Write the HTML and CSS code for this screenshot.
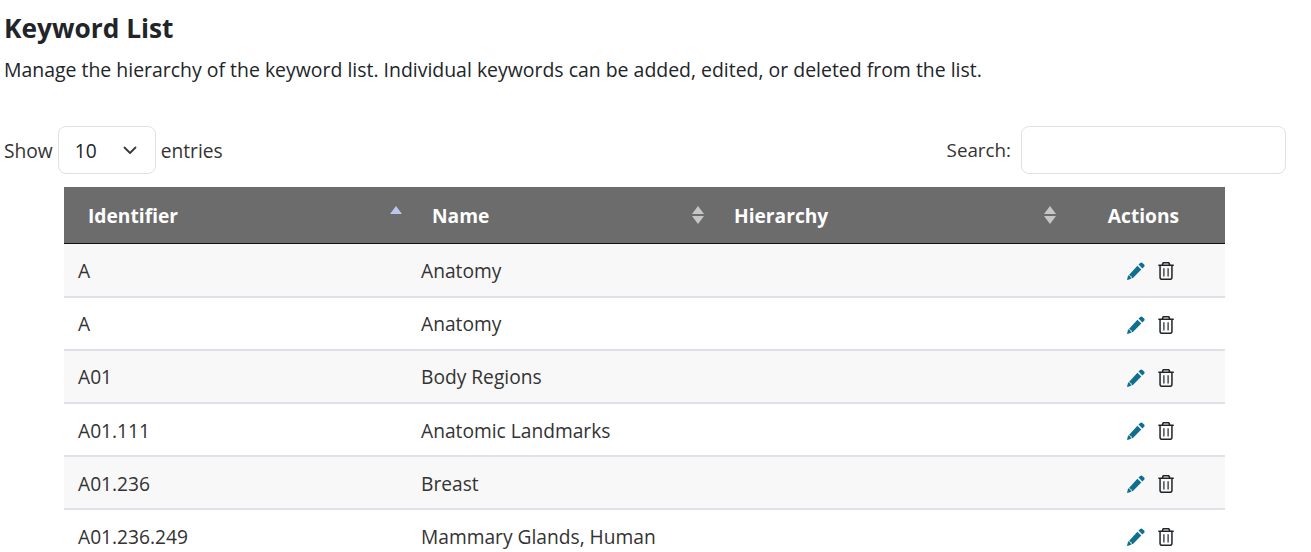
FILE: index.html
```html
<!DOCTYPE html>
<html lang="en">
<head>
<meta charset="utf-8">
<title>Keyword List</title>
<link rel="stylesheet" href="styles.css">
</head>
<body>
<svg class="defs" width="0" height="0" aria-hidden="true">
  <symbol id="pencil" viewBox="0 0 18 18"><path d="M13.200.9a1.600 1.600 0 0 1 2.200 0l1.700 1.700a1.600 1.600 0 0 1 0 2.200l-1.700 1.700-3.900-3.900zM10.400 3.700l3.900 3.900-8.600 8.600-1.100-.5-.3-1.600-1.600-.3-.5-1.100zM1.200 12.900l.8 1.100 1.400.2.3 1.500 1 .8L.6 17.900a.4.4 0 0 1-.5-.5z"/></symbol>
  <symbol id="trash" viewBox="0 0 16 18"><path fill-rule="evenodd" d="M5.600 0h4.800c.7 0 1.300.5 1.500 1.100l.5 1.400h3a.8.8 0 0 1 0 1.500h-.7v11.200a2.800 2.800 0 0 1-2.800 2.800H4.100a2.800 2.800 0 0 1-2.800-2.800V4H.7a.8.8 0 0 1 0-1.500h3l.5-1.400C4.300.5 4.900 0 5.600 0zm.1 1.500-.4 1h5.400l-.4-1zM2.800 4v11.200c0 .7.6 1.300 1.300 1.300h7.800c.7 0 1.300-.6 1.300-1.300V4zm2.500 2.200h1.200v8.200H5.300zm4.200 0h1.200v8.200H9.500z"/></symbol>
</svg>
<main class="page">
  <h1 class="title">Keyword List</h1>
  <p class="lead">Manage the hierarchy of the keyword list. Individual keywords can be added, edited, or deleted from the list.</p>
  <div class="controls">
    <label class="length">Show
      <span class="select">10
        <svg class="chev" viewBox="0 0 16 16" width="16" height="16"><path d="M2.500 5.500 8 11l5.500-5.500" fill="none" stroke="#343a40" stroke-width="1.800" stroke-linecap="round" stroke-linejoin="round"/></svg>
      </span>
      entries</label>
    <label class="search">Search:
      <input class="search-input" type="text" aria-label="Search">
    </label>
  </div>
  <table class="grid">
    <colgroup>
      <col class="c1"><col class="c2"><col class="c3"><col class="c4">
    </colgroup>
    <thead>
      <tr>
        <th><span class="th-in">Identifier<span class="sort only-up"><i class="up active"></i></span></span></th>
        <th><span class="th-in">Name<span class="sort"><i class="up"></i><i class="down"></i></span></span></th>
        <th><span class="th-in">Hierarchy<span class="sort"><i class="up"></i><i class="down"></i></span></span></th>
        <th class="center">Actions</th>
      </tr>
    </thead>
    <tbody>
      <tr><td>A</td><td>Anatomy</td><td></td><td class="acts"><svg class="ic-pen"><use href="#pencil"/></svg><svg class="ic-trash"><use href="#trash"/></svg></td></tr>
      <tr><td>A</td><td>Anatomy</td><td></td><td class="acts"><svg class="ic-pen"><use href="#pencil"/></svg><svg class="ic-trash"><use href="#trash"/></svg></td></tr>
      <tr><td>A01</td><td>Body Regions</td><td></td><td class="acts"><svg class="ic-pen"><use href="#pencil"/></svg><svg class="ic-trash"><use href="#trash"/></svg></td></tr>
      <tr><td>A01.111</td><td>Anatomic Landmarks</td><td></td><td class="acts"><svg class="ic-pen"><use href="#pencil"/></svg><svg class="ic-trash"><use href="#trash"/></svg></td></tr>
      <tr><td>A01.236</td><td>Breast</td><td></td><td class="acts"><svg class="ic-pen"><use href="#pencil"/></svg><svg class="ic-trash"><use href="#trash"/></svg></td></tr>
      <tr><td>A01.236.249</td><td>Mammary Glands, Human</td><td></td><td class="acts"><svg class="ic-pen"><use href="#pencil"/></svg><svg class="ic-trash"><use href="#trash"/></svg></td></tr>
    </tbody>
  </table>
</main>
</body>
</html>
```
FILE: styles.css
```css
* { box-sizing: border-box; }
html, body { margin: 0; height: 552px; overflow: hidden; background: #fff; }
body { font-family: "Open Sans", "Noto Sans", sans-serif; font-size: 20px; color: #212529; }
.defs { display: block; height: 0; }
.page { padding: 12px 25px 0 4px; }
.title { margin: 0; font-size: 26.300px; line-height: 32px; font-weight: 700; }
.lead { margin: 12px 0 0; font-size: 19.450px; line-height: 28px; }
.controls { display: flex; justify-content: space-between; align-items: center; margin-top: 42px; height: 48px; font-size: 19.200px; }
.length, .search { display: flex; align-items: center; color: #333; }
.search { font-size: 18.800px; }
.select { display: flex; align-items: center; justify-content: space-between; width: 98px; height: 48px; margin: 0 5px; padding: 0 17px 0 16px; border: 1px solid #dee2e6; border-radius: 8px; color: #212529; font-size: 19.200px; }
.chev { display: block; }
.search-input { width: 265px; height: 48px; margin-left: 10px; border: 1px solid #dee2e6; border-radius: 8px; background: #fff; }
.grid { width: 1161px; margin: 13px 0 0 60px; border-collapse: collapse; table-layout: fixed; font-size: 19.200px; }
.c1 { width: 344px; } .c2 { width: 302px; } .c3 { width: 352px; } .c4 { width: 163px; }
thead th { height: 56.400px; background: #6c6c6c; color: #fff; font-weight: 700; text-align: left; padding: 1px 6px 0 24px; border-bottom: 1px solid #111; }
.th-in { display: flex; align-items: center; justify-content: space-between; }
th.center { text-align: center; padding: 1px 0 0; }
.sort { display: flex; flex-direction: column; gap: 2px; }
.only-up { transform: translateY(-5px); }
.sort i { display: block; width: 0; height: 0; border-left: 6px solid transparent; border-right: 6px solid transparent; }
.sort .up { border-bottom: 8px solid #c6c6c6; }
.sort .down { border-top: 8px solid #c6c6c6; }
.sort .up.active { border-bottom-color: #bcc6ee; }
tbody td { height: 53.200px; padding: 1px 14px 0; border-bottom: 2px solid #dee2e6; color: #333; }
tbody td:nth-child(2) { padding-left: 13px; }
tbody tr:nth-child(odd) td { background: #f8f8f8; }
td.acts { padding: 0 0 2px 65px; white-space: nowrap; }
.ic-pen { display: inline-block; width: 18px; height: 18px; fill: #0e6f8e; vertical-align: middle; }
.ic-trash { display: inline-block; width: 16px; height: 18px; margin-left: 13px; fill: #212529; vertical-align: middle; }
```
